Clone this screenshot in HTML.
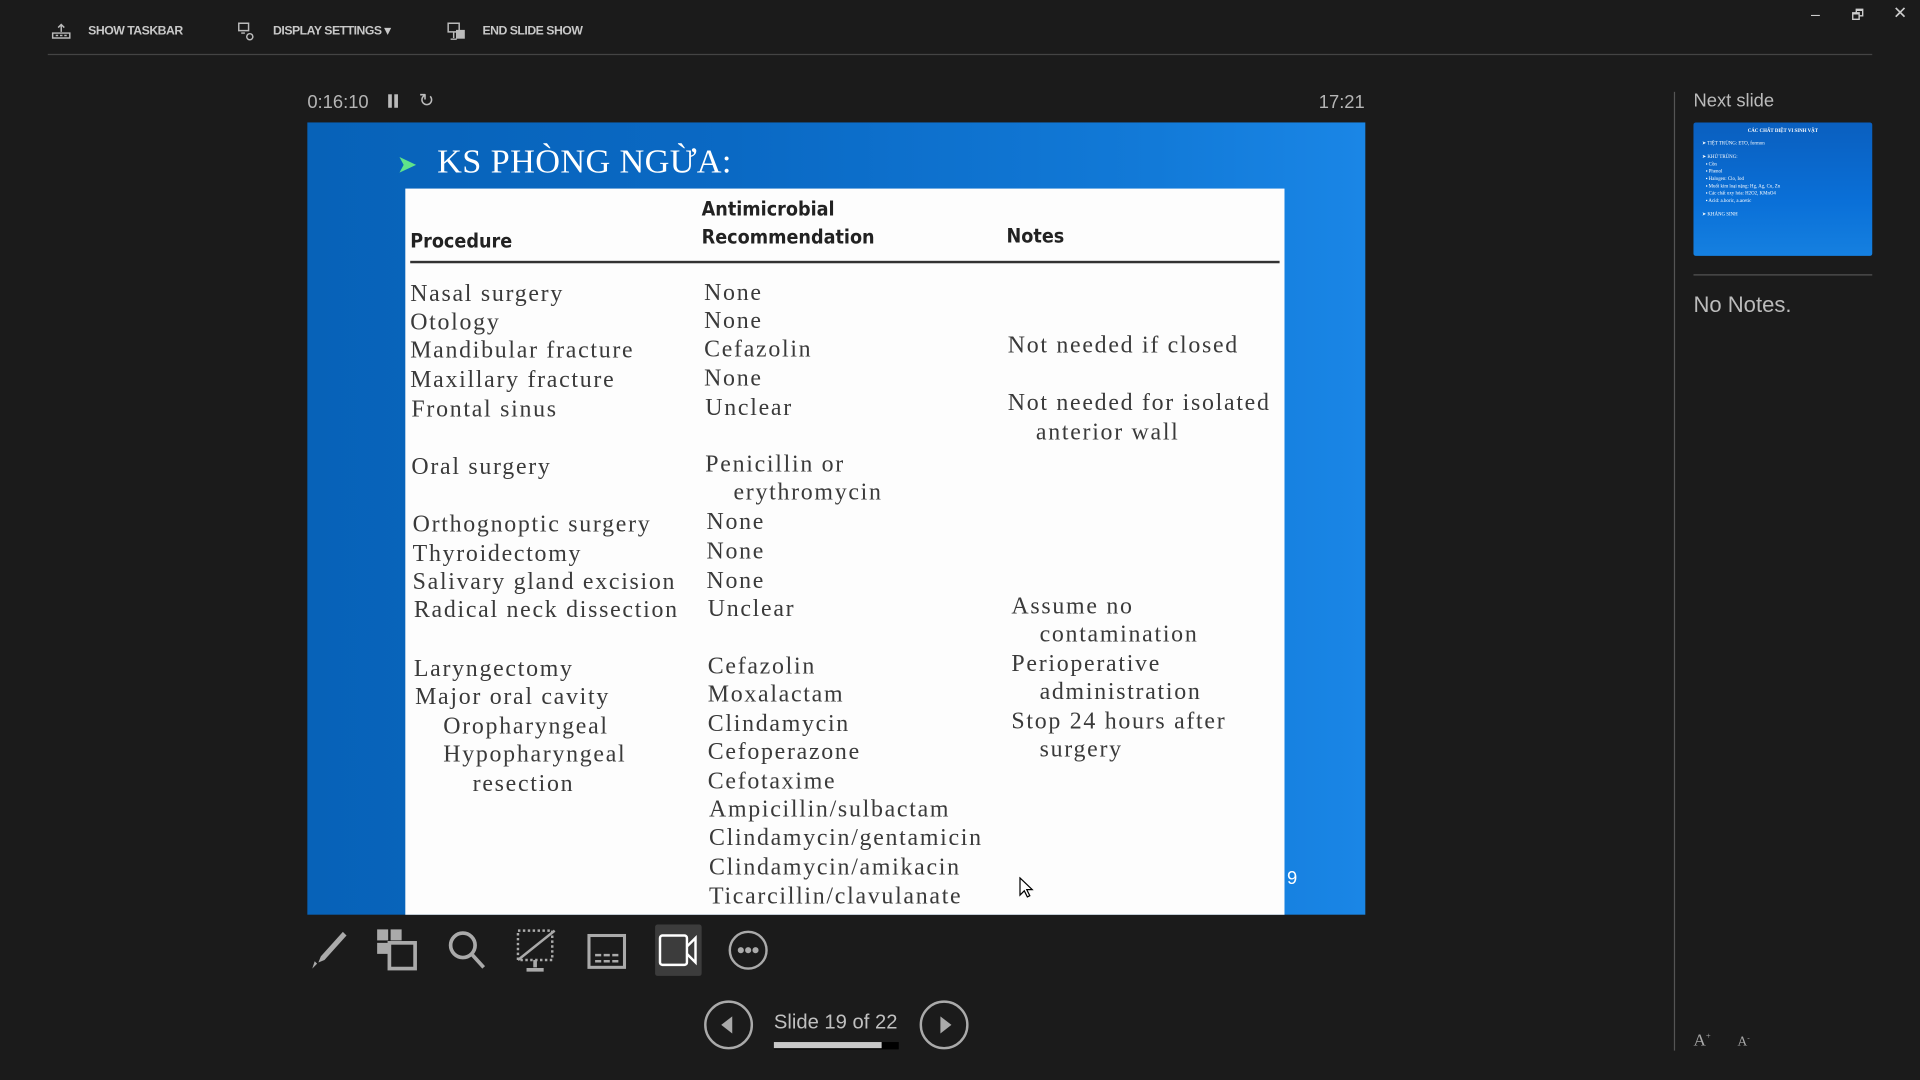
<!DOCTYPE html>
<html><head><meta charset="utf-8"><style>
html,body{margin:0;padding:0;background:#1b1b1b;overflow:hidden;width:1920px;height:1080px}
#w{position:absolute;left:0;top:0;width:1568px;height:882px;transform:scale(1.22449);transform-origin:0 0;font-family:"Liberation Sans",sans-serif;color:#c8c8c8}
.a{position:absolute;white-space:nowrap}
.tb{font-size:10px;font-weight:bold;color:#c8c8c8;top:20px;letter-spacing:-0.4px}
.s{position:absolute;white-space:nowrap;font-family:"Liberation Serif",serif;font-size:19.5px;color:#3a3a3a;letter-spacing:1.4px}
.h{position:absolute;white-space:nowrap;font-family:"DejaVu Sans Condensed","Liberation Sans",sans-serif;font-weight:bold;font-size:16px;color:#222;line-height:23px}
</style></head><body><div id="w">
<svg class="a" style="left:42px;top:19px" width="16" height="14" viewBox="0 0 16 14" fill="none" stroke="#bbb" stroke-width="1.2"><path d="M8 1v6M5.5 3.5L8 1l2.5 2.5M1 8h14v4H1z"/><path d="M3.5 10h2M7 10h2M10.5 10h2"/></svg>
<div class="a tb" style="left:72px">SHOW TASKBAR</div>
<svg class="a" style="left:193px;top:18px" width="16" height="16" viewBox="0 0 16 16" fill="none" stroke="#bbb" stroke-width="1.2"><path d="M2 1h8v6H2zM4 9h3"/><circle cx="11" cy="12" r="2.5"/></svg>
<div class="a tb" style="left:223px">DISPLAY SETTINGS ▾</div>
<svg class="a" style="left:365px;top:18px" width="16" height="16" viewBox="0 0 16 16" fill="none" stroke="#bbb" stroke-width="1.2"><path d="M1 1h9v7H1zM5.5 8v5M3 14h5"/><rect x="8" y="7" width="6" height="6" fill="#bbb"/></svg>
<div class="a tb" style="left:394px">END SLIDE SHOW</div>
<div class="a" style="left:39px;top:44px;width:1490px;height:1px;background:#444"></div>
<div class="a" style="left:1479px;top:4px;font-size:13px;color:#ccc">–</div>
<div class="a" style="left:1512px;top:4px;font-size:11px;color:#ccc">🗗</div>
<div class="a" style="left:1546px;top:2px;font-size:14px;color:#ccc">✕</div>
<div class="a" style="left:251px;top:75px;font-size:15px;color:#b5b5b5">0:16:10</div>
<div class="a" style="left:317px;top:77px;width:3px;height:11px;background:#bbb"></div>
<div class="a" style="left:322px;top:77px;width:3px;height:11px;background:#bbb"></div>
<div class="a" style="left:342px;top:73px;font-size:15px;color:#bbb">↻</div>
<div class="a" style="left:1077px;top:75px;font-size:15px;color:#b5b5b5">17:21</div>
<div class="a" style="left:251px;top:100px;width:864px;height:647px;background:linear-gradient(90deg,#0762b8 0%,#0a69c4 40%,#127ad8 80%,#1a86e6 100%);overflow:hidden">
 <div class="a" style="left:73px;top:22px;color:#5fe38a;font-size:20px">➤</div>
 <div class="a" style="left:106px;top:17px;font-family:'Liberation Serif',serif;font-size:28px;color:#fff;letter-spacing:0.3px">KS PHÒNG NGỪA:</div>
 <div class="a" style="left:80px;top:54px;width:718px;height:600px;background:#fdfdfd">
  <div class="h" style="left:4px;top:31px">Procedure</div>
  <div class="h" style="left:242px;top:5px">Antimicrobial<br>Recommendation</div>
  <div class="h" style="left:491px;top:27px">Notes</div>
  <div class="a" style="left:4px;top:59px;width:710px;height:2px;background:#333"></div>
 </div>
 <div class="a" style="left:800px;top:609px;color:#fff;font-size:15px">9</div>
</div>
<div id="t" class="a" style="left:331px;top:154px">
<div class="s" style="left:4px;top:76px">Nasal surgery</div><div class="s" style="left:244px;top:75px">None</div>
<div class="s" style="left:4px;top:99px">Otology</div><div class="s" style="left:244px;top:98px">None</div>
<div class="s" style="left:4px;top:122px">Mandibular fracture</div><div class="s" style="left:244px;top:121px">Cefazolin</div><div class="s" style="left:492px;top:118px">Not needed if closed</div>
<div class="s" style="left:4px;top:146px">Maxillary fracture</div><div class="s" style="left:244px;top:145px">None</div>
<div class="s" style="left:5px;top:170px">Frontal sinus</div><div class="s" style="left:245px;top:169px">Unclear</div><div class="s" style="left:492px;top:165px">Not needed for isolated</div><div class="s" style="left:515px;top:189px">anterior wall</div>
<div class="s" style="left:5px;top:217px">Oral surgery</div><div class="s" style="left:245px;top:215px">Penicillin or</div><div class="s" style="left:268px;top:238px">erythromycin</div>
<div class="s" style="left:6px;top:264px">Orthognoptic surgery</div><div class="s" style="left:246px;top:262px">None</div>
<div class="s" style="left:6px;top:288px">Thyroidectomy</div><div class="s" style="left:246px;top:286px">None</div>
<div class="s" style="left:6px;top:311px">Salivary gland excision</div><div class="s" style="left:246px;top:310px">None</div>
<div class="s" style="left:7px;top:334px">Radical neck dissection</div><div class="s" style="left:247px;top:333px">Unclear</div><div class="s" style="left:495px;top:331px">Assume no</div><div class="s" style="left:518px;top:354px">contamination</div>
<div class="s" style="left:7px;top:382px">Laryngectomy</div><div class="s" style="left:247px;top:380px">Cefazolin</div><div class="s" style="left:495px;top:378px">Perioperative</div>
<div class="s" style="left:8px;top:405px">Major oral cavity</div><div class="s" style="left:247px;top:403px">Moxalactam</div><div class="s" style="left:518px;top:401px">administration</div>
<div class="s" style="left:31px;top:429px">Oropharyngeal</div><div class="s" style="left:247px;top:427px">Clindamycin</div><div class="s" style="left:495px;top:425px">Stop 24 hours after</div>
<div class="s" style="left:31px;top:452px">Hypopharyngeal</div><div class="s" style="left:247px;top:450px">Cefoperazone</div><div class="s" style="left:518px;top:448px">surgery</div>
<div class="s" style="left:55px;top:476px">resection</div><div class="s" style="left:247px;top:474px">Cefotaxime</div>
<div class="s" style="left:248px;top:497px">Ampicillin/sulbactam</div>
<div class="s" style="left:248px;top:520px">Clindamycin/gentamicin</div>
<div class="s" style="left:248px;top:544px">Clindamycin/amikacin</div>
<div class="s" style="left:248px;top:568px">Ticarcillin/clavulanate</div>
</div>
<svg class="a" style="left:832px;top:716px" width="12" height="18" viewBox="0 0 12 18"><path d="M1 1v14l3.5-3.5 2.5 5 2-1-2.5-5H11z" fill="#fff" stroke="#000" stroke-width="1"/></svg>
<svg class="a" style="left:252px;top:758px" width="34" height="36" viewBox="0 0 34 36" fill="#aaa"><path d="M28 3l3 3-18 20-5 2 2-5z"/><path d="M5 27l2 2-4 4z"/></svg>
<svg class="a" style="left:307px;top:758px" width="36" height="36" viewBox="0 0 36 36" fill="none"><rect x="1" y="1" width="9" height="9" fill="#aaa"/><rect x="12" y="1" width="9" height="9" fill="#aaa"/><rect x="1" y="12" width="9" height="9" fill="#aaa"/><rect x="11" y="12" width="21" height="21" stroke="#aaa" stroke-width="3"/></svg>
<svg class="a" style="left:364px;top:758px" width="36" height="36" viewBox="0 0 36 36" fill="none" stroke="#aaa" stroke-width="3"><circle cx="14" cy="14" r="10"/><path d="M21 21l10 11"/></svg>
<svg class="a" style="left:420px;top:757px" width="38" height="38" viewBox="0 0 38 38" fill="none" stroke="#aaa" stroke-width="2"><path d="M3 3h28v24H3z" stroke-dasharray="2 2"/><path d="M3 27L33 3" stroke-width="2"/><path d="M17 27v6M10 35h14" stroke-width="3"/></svg>
<svg class="a" style="left:479px;top:760px" width="34" height="34" viewBox="0 0 34 34" fill="none" stroke="#aaa" stroke-width="2.5"><rect x="2" y="4" width="29" height="26"/><path d="M7 20h19M7 25h19" stroke-width="2" stroke-dasharray="5 2"/></svg>
<div class="a" style="left:535px;top:755px;width:38px;height:42px;background:#3c3c3c;border-radius:2px"></div>
<svg class="a" style="left:537px;top:761px" width="34" height="30" viewBox="0 0 34 30" fill="none" stroke="#fff" stroke-width="2"><rect x="2" y="3" width="22" height="24" rx="2"/><path d="M24 12l7-7v20l-7-7"/></svg>
<svg class="a" style="left:593px;top:758px" width="36" height="36" viewBox="0 0 36 36" fill="none" stroke="#aaa" stroke-width="2"><circle cx="18" cy="18" r="15"/><circle cx="12" cy="18" r="1.5" fill="#aaa"/><circle cx="18" cy="18" r="1.5" fill="#aaa"/><circle cx="24" cy="18" r="1.5" fill="#aaa"/></svg>
<svg class="a" style="left:574px;top:816px" width="42" height="42" viewBox="0 0 42 42" fill="none" stroke="#aaa" stroke-width="2"><circle cx="21" cy="21" r="19"/><path d="M24 14v14l-9-7z" fill="#aaa" stroke="none"/></svg>
<div class="a" style="left:632px;top:826px;font-size:16.5px;color:#c0c0c0">Slide 19 of 22</div>
<div class="a" style="left:632px;top:851px;width:102px;height:6px;background:#000"></div>
<div class="a" style="left:632px;top:851px;width:88px;height:5px;background:#c8c8c8"></div>
<svg class="a" style="left:750px;top:816px" width="42" height="42" viewBox="0 0 42 42" fill="none" stroke="#aaa" stroke-width="2"><circle cx="21" cy="21" r="19"/><path d="M18 14v14l9-7z" fill="#aaa" stroke="none"/></svg>
<div class="a" style="left:1367px;top:75px;width:1px;height:783px;background:#555"></div>
<div class="a" style="left:1383px;top:74px;font-size:15px;color:#bbb">Next slide</div>
<div class="a" style="left:1383px;top:100px;width:146px;height:109px;border-radius:2px;background:linear-gradient(180deg,#0a5fbf,#0a70d8 60%,#1580e0);font-family:'Liberation Serif',serif;color:#fff;font-size:4px;line-height:6px">
<div style="text-align:center;margin-top:4px;font-weight:bold">CÁC CHẤT DIỆT VI SINH VẬT</div>
<div style="margin:4px 0 0 7px">➤ TIỆT TRÙNG: ETO, formon</div>
<div style="margin:5px 0 0 7px">➤ KHỬ TRÙNG:<br>&nbsp;&nbsp;&nbsp;▪ Cồn<br>&nbsp;&nbsp;&nbsp;▪ Phenol<br>&nbsp;&nbsp;&nbsp;▪ Halogen: Clo, Iod<br>&nbsp;&nbsp;&nbsp;▪ Muối kim loại nặng: Hg, Ag, Cu, Zn<br>&nbsp;&nbsp;&nbsp;▪ Các chất oxy hóa: H2O2, KMnO4<br>&nbsp;&nbsp;&nbsp;▪ Acid: a.boric, a.acetic</div>
<div style="margin:5px 0 0 7px">➤ KHÁNG SINH</div>
</div>
<div class="a" style="left:1383px;top:224px;width:146px;height:1px;background:#555"></div>
<div class="a" style="left:1383px;top:239px;font-size:18px;color:#bbb">No Notes.</div>
<div class="a" style="left:1383px;top:842px;font-size:14px;color:#aaa;font-family:'Liberation Serif',serif">A<sup style="font-size:7px">+</sup></div>
<div class="a" style="left:1419px;top:845px;font-size:11px;color:#aaa;font-family:'Liberation Serif',serif">A<sup style="font-size:6px">-</sup></div>
</div></body></html>
